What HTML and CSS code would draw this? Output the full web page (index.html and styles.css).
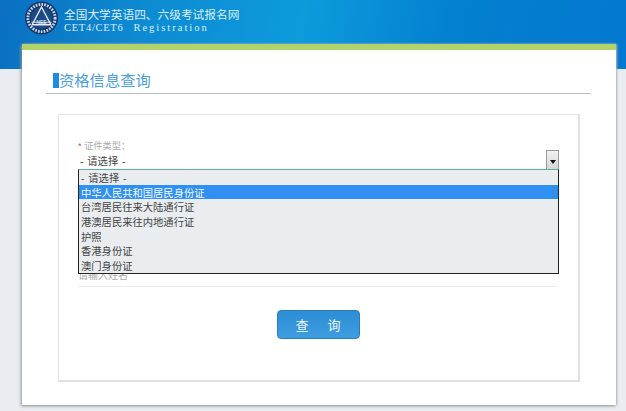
FILE: index.html
```html
<!DOCTYPE html>
<html lang="zh">
<head>
<meta charset="utf-8">
<title>资格信息查询</title>
<link rel="stylesheet" href="styles.css">
</head>
<body>
<header class="banner">
  <svg class="logo" viewBox="0 0 40 40" aria-hidden="true">
    <circle cx="20" cy="20" r="19.5" fill="#12386f"/>
    <circle cx="20" cy="20" r="16" fill="none" stroke="#c9d6e2" stroke-width="3.4" stroke-dasharray="2 1.4"/>
    <circle cx="20" cy="20" r="12.6" fill="#1b4a85"/>
    <path d="M20 7 L31 28 H9 Z" fill="none" stroke="#e6edf3" stroke-width="1.6"/>
    <path d="M8 25 H32" stroke="#e6edf3" stroke-width="1"/>
    <text x="20" y="27" class="logo-text" text-anchor="middle">NEE</text>
  </svg>
  <div class="brand">
    <div class="brand-cn">全国大学英语四、六级考试报名网</div>
    <div class="brand-en"><span class="brand-cet">CET4/CET6</span><span class="brand-reg">Registration</span></div>
  </div>
</header>
<main class="card">
  <h1 class="title">资格信息查询</h1>
  <section class="panel">
    <div class="field">
      <div class="label"><span class="star">*</span> 证件类型：</div>
      <div class="select">
        <span>- 请选择 -</span>
        <span class="arrow"></span>
      </div>
      <ul class="dropdown">
        <li>- 请选择 -</li>
        <li class="active">中华人民共和国居民身份证</li>
        <li>台湾居民往来大陆通行证</li>
        <li>港澳居民来往内地通行证</li>
        <li>护照</li>
        <li>香港身份证</li>
        <li>澳门身份证</li>
      </ul>
    </div>
    <div class="name-field">请输入姓名</div>
    <div class="actions"><button class="btn" type="button">查　询</button></div>
  </section>
</main>
</body>
</html>
```
FILE: styles.css
```css
* { box-sizing: border-box; }
html, body { margin: 0; padding: 0; }
body {
  width: 626px;
  height: 411px;
  overflow: hidden;
  background: #e9edf1;
  font-family: "Liberation Sans", "Noto Sans CJK SC", sans-serif;
  position: relative;
}
.banner {
  height: 69px;
  background: linear-gradient(100deg, #0a6fc0 0%, #0d8ad2 22%, #0d9bdc 48%, #0380cf 72%, #0478d0 100%);
  display: flex;
  align-items: flex-start;
  padding: 1px 0 0 24px;
  gap: 5px;
}
.logo { width: 35px; height: 34px; flex: none; }
.logo-text { font-size: 6px; fill: #fff; font-family: "Liberation Sans", sans-serif; }
.brand { color: #dcedf8; padding-top: 7px; }
.brand-cn { font-size: 11.7px; line-height: 14px; white-space: nowrap; }
.brand-en { font-family: "Liberation Serif", serif; font-size: 10.5px; line-height: 11px; white-space: nowrap; }
.brand-cet { letter-spacing: 0.7px; }
.brand-reg { margin-left: 10px; letter-spacing: 2px; }
.card {
  margin: -25px 10px 0 22px;
  height: 361px;
  background: #fff;
  border-top: 6px solid #b1d36b;
  box-shadow: -1px 1px 3px #8f959b, 1px 0 2px #b5bbc1;
  position: relative;
  padding: 0 25px 0 24px;
}
.title {
  margin: 0;
  height: 44px;
  padding: 22px 0 0 7px;
  border-bottom: 1px solid #bdbdbd;
  font-weight: normal;
  font-size: 15.3px;
  line-height: 17px;
  color: #4a9fe0;
  position: relative;
  text-indent: 6px;
}
.title::before {
  content: "";
  position: absolute;
  left: 7px;
  top: 23px;
  width: 6px;
  height: 15px;
  background: #1f8ae4;
}
.panel {
  margin: 20px 11px 0 12px;
  height: 268px;
  border: 1px solid #e4e4e4;
  border-right: 2px solid #e0e0e0;
  border-bottom: 2px solid #e0e0e0;
  padding: 25px 20px 0 19px;
}
.field { position: relative; height: 128px; }
.label { font-size: 9.2px; line-height: 12px; color: #aaa; height: 15px; }
.star { color: #e0405a; }
.select {
  height: 22px;
  display: flex;
  justify-content: space-between;
  padding: 0 0 0 2px;
  font-size: 10.3px;
  word-spacing: 1px;
  line-height: 14px;
  color: #444;
}
.arrow {
  width: 13px;
  height: 21px;
  margin-top: -5px;
  margin-right: -1px;
  border: 1px solid #9a9a9a;
  background: linear-gradient(#f2f2f2, #d4d4d4);
  position: relative;
}
.arrow::after {
  content: "";
  position: absolute;
  left: 3px;
  top: 9px;
  border: 3px solid transparent;
  border-top: 4px solid #111;
  border-bottom: 0;
}
.dropdown {
  position: absolute;
  left: 0;
  right: -1px;
  top: 29px;
  margin: 0;
  padding: 0;
  list-style: none;
  height: 105px;
  background: #e9edf0;
  border: 1px solid #222;
  border-top: 1px solid #5fb09c;
  font-size: 10.3px;
  word-spacing: 1px;
  color: #444;
}
.dropdown li { padding-left: 2px; height: 14.7px; line-height: 17px; white-space: nowrap; }
.dropdown .active { background: #2f90f2; color: #f4f9ff; }
.name-field {
  margin-top: 2px;
  height: 17px;
  font-size: 10px;
  line-height: 12px;
  color: #aaa;
  border-bottom: 1px solid #ececec;
}
.actions { display: flex; justify-content: center; padding: 23px 0 0 0; }
.btn {
  width: 83px;
  height: 29px;
  border: 1px solid #2a7fb9;
  border-radius: 4px;
  background: linear-gradient(#2c8ed6, #3f9cdf);
  color: #e8f4fc;
  font: 13px "Liberation Sans", "Noto Sans CJK SC", sans-serif;
  padding: 0 0 0 3px;
  letter-spacing: 3px;
}
```
